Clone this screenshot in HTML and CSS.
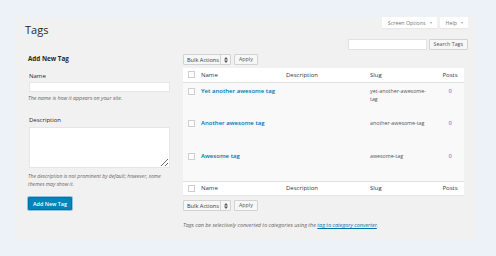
FILE: index.html
```html
<!DOCTYPE html>
<html lang="en">
<head>
    <meta charset="UTF-8">
    <title>Tags</title>
    <link rel="stylesheet" href="styles.css">
</head>
<body>
    <div class="panel">
        <div class="header">
            <h1>Tags</h1>
            <div class="screen-meta">
                <span class="meta-btn">Screen Options <span class="caret">&#9662;</span></span>
                <span class="meta-btn">Help <span class="caret">&#9662;</span></span>
            </div>
        </div>
        <div class="search-row">
            <input type="text" class="search-input">
            <button class="btn">Search Tags</button>
        </div>
        <div class="columns">
            <div class="col-left">
                <h3>Add New Tag</h3>
                <label class="field-label">Name</label>
                <input type="text" class="field-input">
                <p class="help">The name is how it appears on your site.</p>
                <label class="field-label desc-label">Description</label>
                <textarea class="field-textarea"></textarea>
                <p class="help desc-help">The description is not prominent by default; however, some themes may show it.</p>
                <button class="btn-primary">Add New Tag</button>
            </div>
            <div class="col-right">
                <div class="tablenav">
                    <span class="select">Bulk Actions <span class="select-arrow"><svg width="4" height="6" viewBox="0 0 4 6"><path d="M0 2.4L2 0 4 2.4zM0 3.6L2 6 4 3.6z" fill="#555"/></svg></span></span>
                    <button class="btn">Apply</button>
                </div>
                <table class="tags-table">
                    <thead>
                        <tr>
                            <th class="col-cb"><span class="cb"></span></th>
                            <th class="col-name">Name</th>
                            <th class="col-desc">Description</th>
                            <th class="col-slug">Slug</th>
                            <th class="col-posts">Posts</th>
                        </tr>
                    </thead>
                    <tbody>
                        <tr>
                            <td class="col-cb"><span class="cb"></span></td>
                            <td class="col-name"><a href="#">Yet another awesome tag</a></td>
                            <td class="col-desc"></td>
                            <td class="col-slug">yet-another-awesome-tag</td>
                            <td class="col-posts"><a href="#">0</a></td>
                        </tr>
                        <tr>
                            <td class="col-cb"><span class="cb"></span></td>
                            <td class="col-name"><a href="#">Another awesome tag</a></td>
                            <td class="col-desc"></td>
                            <td class="col-slug">another-awesome-tag</td>
                            <td class="col-posts"><a href="#">0</a></td>
                        </tr>
                        <tr>
                            <td class="col-cb"><span class="cb"></span></td>
                            <td class="col-name"><a href="#">Awesome tag</a></td>
                            <td class="col-desc"></td>
                            <td class="col-slug">awesome-tag</td>
                            <td class="col-posts"><a href="#">0</a></td>
                        </tr>
                    </tbody>
                    <tfoot>
                        <tr>
                            <th class="col-cb"><span class="cb"></span></th>
                            <th class="col-name">Name</th>
                            <th class="col-desc">Description</th>
                            <th class="col-slug">Slug</th>
                            <th class="col-posts">Posts</th>
                        </tr>
                    </tfoot>
                </table>
                <div class="tablenav bottom">
                    <span class="select">Bulk Actions <span class="select-arrow"><svg width="4" height="6" viewBox="0 0 4 6"><path d="M0 2.4L2 0 4 2.4zM0 3.6L2 6 4 3.6z" fill="#555"/></svg></span></span>
                    <button class="btn">Apply</button>
                </div>
                <p class="note">Tags can be selectively converted to categories using the <a href="#">tag to category converter</a>.</p>
            </div>
        </div>
    </div>
</body>
</html>
```

FILE: styles.css
```css
body {
    margin: 0;
    padding: 17px 0 0 16px;
    background-color: #edf1f8;
    font-family: "Open Sans", Arial, sans-serif;
    color: #444;
}
.panel {
    width: 460px;
    height: 223px;
    box-sizing: border-box;
    padding: 0 8px 0 9px;
    background-color: #f1f1f1;
}
.header {
    display: flex;
    justify-content: space-between;
    align-items: flex-start;
}
h1 {
    margin: 6px 0 0 0;
    font-size: 11px;
    line-height: 14px;
    font-weight: 400;
    color: #23282d;
}
.screen-meta {
    display: flex;
    gap: 3px;
}
.meta-btn {
    display: flex;
    align-items: center;
    height: 11px;
    padding: 0 5px 0 6px;
    background: #fff;
    font-size: 5.3px;
    color: #72777c;
    box-shadow: 0 1px 1px rgba(0, 0, 0, 0.04);
}
.caret {
    margin-left: 4px;
    font-size: 4px;
    color: #a0a5aa;
}
.search-row {
    display: flex;
    justify-content: flex-end;
    gap: 2px;
    margin-top: 2px;
}
.search-input {
    width: 79px;
    height: 11px;
    box-sizing: border-box;
    margin: 0;
    border: 1px solid #e2e2e2;
    background: #fff;
    padding: 0;
}
.btn {
    height: 11px;
    box-sizing: border-box;
    margin: 0;
    padding: 0 4px;
    border: 1px solid #d2d2d2;
    border-radius: 1px;
    background: #f7f7f7;
    font-family: "Open Sans", Arial, sans-serif;
    font-size: 5.3px;
    line-height: 9px;
    color: #555;
}
.columns {
    display: flex;
    gap: 9px;
    margin-top: 4px;
}
.col-left {
    width: 146px;
    padding-left: 3px;
    display: flex;
    flex-direction: column;
    align-items: flex-start;
}
h3 {
    margin: 0;
    font-size: 6.3px;
    line-height: 10px;
    font-weight: 700;
    color: #23282d;
}
.field-label {
    margin-top: 7px;
    padding-left: 1px;
    font-size: 6px;
    line-height: 10px;
    color: #23282d;
}
.desc-label {
    margin-top: 13px;
}
.field-input {
    width: 141px;
    height: 10px;
    box-sizing: border-box;
    margin: 1px 0 0 1px;
    padding: 0;
    border: 1px solid #e6e6e6;
    background: #fff;
}
.field-textarea {
    width: 141px;
    height: 41px;
    box-sizing: border-box;
    margin: 2px 0 0 1px;
    padding: 0;
    border: 1px solid #e6e6e6;
    background: #fff;
}
.help {
    margin: 2px 0 0 0;
    font-size: 5.3px;
    line-height: 8px;
    font-style: italic;
    color: #666;
}
.desc-help {
    margin-top: 4px;
    font-size: 5.1px;
}
.btn-primary {
    margin-top: 9px;
    width: 44px;
    height: 13px;
    box-sizing: border-box;
    padding: 0;
    border: 1px solid #0073aa;
    border-radius: 1px;
    background: #0085ba;
    box-shadow: 0 0 0 1px #8ec2e6;
    font-family: "Open Sans", Arial, sans-serif;
    font-size: 5.4px;
    font-weight: 600;
    color: #fff;
}
.col-right {
    width: 281px;
}
.tablenav {
    display: flex;
    gap: 3px;
    height: 11px;
}
.tablenav.bottom {
    margin-top: 5px;
}
.select {
    display: flex;
    align-items: center;
    width: 48px;
    height: 11px;
    box-sizing: border-box;
    padding-left: 3px;
    border: 1px solid #d2d2d2;
    border-radius: 1px;
    background: #f7f7f7;
    font-size: 5.6px;
    color: #32373c;
}
.select-arrow {
    display: flex;
    align-items: center;
    justify-content: center;
    margin-left: auto;
    width: 9px;
    height: 100%;
    border-left: 1px solid #d2d2d2;
}
.tags-table {
    width: 281px;
    margin-top: 3px;
    border-collapse: collapse;
    table-layout: fixed;
    background: #f9f9f9;
    box-shadow: 0 1px 1px rgba(0, 0, 0, 0.04);
}
.tags-table th,
.tags-table td {
    box-sizing: border-box;
}
.tags-table th {
    height: 14px;
    padding: 0 4px;
    background: #fff;
    font-size: 6px;
    font-weight: 400;
    text-align: left;
    color: #32373c;
    vertical-align: middle;
}
.tags-table thead th {
    border-bottom: 1px solid #e1e1e1;
}
.tags-table tfoot th {
    border-top: 1px solid #e1e1e1;
}
.tags-table td {
    height: 33px;
    padding: 4px 4px 0 4px;
    font-size: 5.3px;
    line-height: 8px;
    color: #555;
    vertical-align: top;
}
.tags-table .col-cb {
    width: 14px;
    padding: 0 0 0 5px;
}
.tags-table td.col-cb {
    padding-top: 5px;
}
.tags-table .col-name {
    width: 85px;
}
.tags-table .col-desc {
    width: 84px;
}
.tags-table .col-slug {
    width: 70px;
}
.tags-table .col-posts {
    width: 28px;
    padding: 0;
    text-align: center;
}
.tags-table td.col-posts {
    padding-top: 4px;
}
.tags-table td.col-name a {
    font-size: 6px;
    font-weight: 600;
    color: #0073aa;
    text-decoration: none;
    white-space: nowrap;
}
.tags-table td.col-posts a {
    font-size: 5.5px;
    color: #0073aa;
    text-decoration: none;
}
.cb {
    display: block;
    width: 7px;
    height: 7px;
    box-sizing: border-box;
    border: 1px solid #cbcfd3;
    background: #fff;
}
.note {
    margin: 10px 0 0 0;
    font-size: 5.4px;
    line-height: 8px;
    font-style: italic;
    color: #666;
}
.note a {
    color: #0073aa;
}
```
